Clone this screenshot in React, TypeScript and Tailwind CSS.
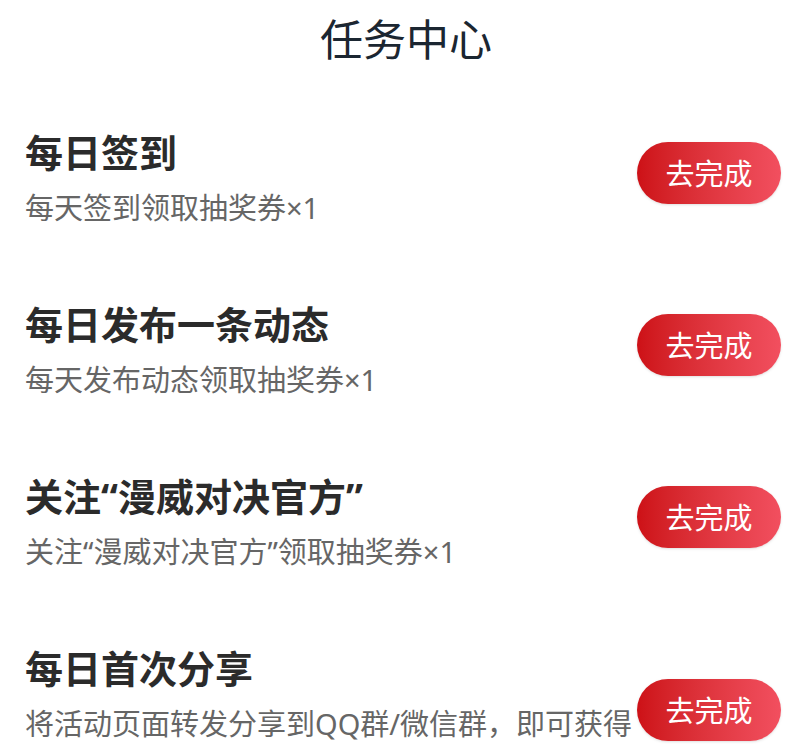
const tasks = [
  { title: "每日签到", desc: "每天签到领取抽奖券×1" },
  { title: "每日发布一条动态", desc: "每天发布动态领取抽奖券×1" },
  { title: "关注“漫威对决官方”", desc: "关注“漫威对决官方”领取抽奖券×1" },
  { title: "每日首次分享", desc: "将活动页面转发分享到QQ群/微信群，即可获得抽奖券×1" },
];

export default function App() {
  return (
    <div className="min-h-screen bg-white font-['Noto_Sans','Noto_Sans_CJK_SC',sans-serif]">
      <h1 className="text-center text-[43px] leading-[80px] text-[#1b2631]">任务中心</h1>
      <ul className="flex flex-col gap-[60px] pt-[37px] pl-[25px] pr-[31px]">
        {tasks.map((t) => (
          <li key={t.title} className="flex items-center">
            <div className="flex-1 min-w-0">
              <div className="text-[38px] leading-[70px] font-bold text-[#2b2b2b]">{t.title}</div>
              <div className="text-[29px] leading-[42px] text-[#666666]">{t.desc}</div>
            </div>
            <button className="w-[144px] h-[62px] shrink-0 rounded-full bg-gradient-to-r from-[#cd1016] to-[#f24f5f] text-white text-[29px] font-['Noto_Sans_CJK_SC',sans-serif] shadow-sm">
              去完成
            </button>
          </li>
        ))}
      </ul>
    </div>
  );
}
